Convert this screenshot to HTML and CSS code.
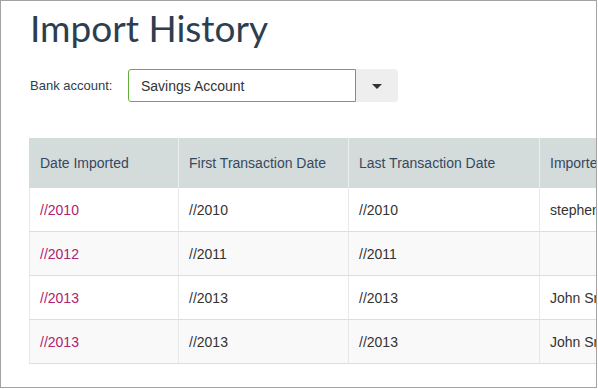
FILE: index.html
```html
<!DOCTYPE html>
<html>
<head>
<meta charset="utf-8">
<link rel="stylesheet" href="styles.css">
</head>
<body>
<div class="frame">
  <h1 class="title">Import History</h1>
  <div class="account-row">
    <label class="account-label">Bank account:</label>
    <div class="select">
      <span class="select-value">Savings Account</span>
    </div>
    <div class="select-btn"><span class="caret"></span></div>
  </div>
  <div class="table-wrap">
    <table class="history">
      <colgroup>
        <col class="c1"><col class="c2"><col class="c3"><col class="c4">
      </colgroup>
      <thead>
        <tr><th>Date Imported</th><th>First Transaction Date</th><th>Last Transaction Date</th><th>Imported By</th></tr>
      </thead>
      <tbody>
        <tr><td><a class="link">//2010</a></td><td>//2010</td><td>//2010</td><td>stephen</td></tr>
        <tr class="alt"><td><a class="link">//2012</a></td><td>//2011</td><td>//2011</td><td></td></tr>
        <tr><td><a class="link">//2013</a></td><td>//2013</td><td>//2013</td><td>John Smith</td></tr>
        <tr class="alt"><td><a class="link">//2013</a></td><td>//2013</td><td>//2013</td><td>John Smith</td></tr>
      </tbody>
    </table>
  </div>
</div>
</body>
</html>
```
FILE: styles.css
```css
html, body {
  margin: 0;
  padding: 0;
  background: #ffffff;
}
.frame {
  box-sizing: border-box;
  width: 597px;
  height: 388px;
  border: 1px solid #a3a3a3;
  padding: 0 0 0 28px;
  overflow: hidden;
  font-family: "Liberation Sans", Arial, sans-serif;
  color: #333333;
}
.title {
  margin: 0;
  padding-top: 5px;
  height: 44px;
  line-height: 44px;
  font-family: Lato, "Open Sans", sans-serif;
  font-weight: 400;
  font-size: 37px;
  color: #2c3e50;
  padding-left: 1px;
}
.account-row {
  display: flex;
  align-items: center;
  margin-top: 19px;
  height: 33px;
}
.account-label {
  width: 99px;
  padding-left: 1px;
  box-sizing: border-box;
  font-size: 13px;
  color: #2c3e50;
}
.select {
  box-sizing: border-box;
  width: 228px;
  height: 33px;
  border: 1px solid #62b03a;
  border-radius: 3px 0 0 3px;
  display: flex;
  align-items: center;
  padding-left: 12px;
  font-size: 14px;
  color: #333;
}
.select-btn {
  width: 42px;
  height: 33px;
  background: #eeeeee;
  border-radius: 0 4px 4px 0;
  display: flex;
  align-items: center;
  justify-content: center;
}
.caret {
  width: 0;
  height: 0;
  border-left: 5px solid transparent;
  border-right: 5px solid transparent;
  border-top: 5px solid #333;
  margin-top: 1px;
}
.table-wrap {
  margin-top: 36px;
}
.history {
  table-layout: fixed;
  border-collapse: separate;
  border-spacing: 0;
  width: 700px;
  font-size: 14px;
}
.c1 { width: 149px; }
.c2 { width: 170px; }
.c3 { width: 191px; }
.c4 { width: 190px; }
.history th,
.history td {
  box-sizing: border-box;
  padding: 0 11px 0 10px;
  text-align: left;
  white-space: nowrap;
  border-left: 1px solid #e8e8e8;
}
.history th {
  height: 50px;
  font-weight: 400;
  color: #34495e;
  background: #d4dbdb;
  border-left-color: #eaeeee;
}
.history th:first-child {
  border-left: none;
  padding-left: 11px;
}
.history td {
  height: 44px;
  border-bottom: 1px solid #dddddd;
  color: #333333;
  background: #ffffff;
}
.history tr.alt td { background: #f9f9f9; }
.link {
  color: #b0226e;
  text-decoration: none;
}
```
